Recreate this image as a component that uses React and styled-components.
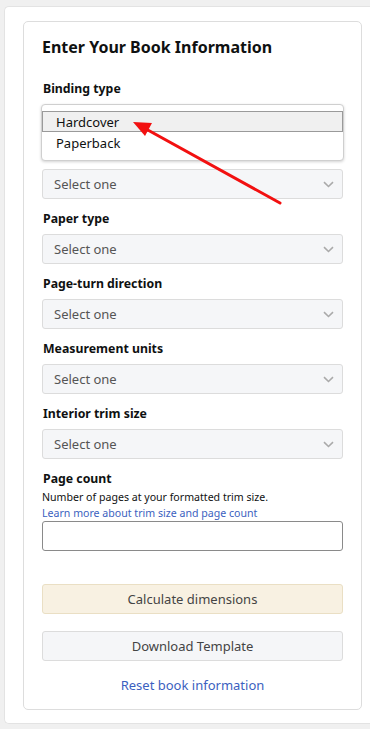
import React from "react";
import styled, { createGlobalStyle } from "styled-components";

const Global = createGlobalStyle`
  html, body { margin: 0; padding: 0; background: #f0f0f0; }
  body { font-family: "Noto Sans", "Open Sans", Arial, sans-serif; color: #0f1111; }
  * { box-sizing: border-box; }
`;

const Page = styled.div`
  padding: 6px 0 6px 4px;
  height: 729px;
  overflow: hidden;
`;

const Outer = styled.div`
  background: #fff;
  border: 1px solid #e3e3e3;
  border-right: none;
  border-radius: 5px 0 0 5px;
  padding: 14px 8px 13px 18px;
  height: 718px;
`;

const Card = styled.div`
  position: relative;
  background: #fff;
  border: 1px solid #dddddd;
  border-radius: 5px;
  padding: 12px 18px 12px 18px;
  height: 689px;
`;

const Title = styled.h1`
  margin: 0 0 20px 0;
  font-size: 16px;
  font-weight: 700;
  line-height: 26px;
  color: #0f1111;
`;

const Field = styled.div`
  display: flex;
  flex-direction: column;
  margin-bottom: 11px;
`;

const Label = styled.div`
  font-size: 12.3px;
  font-weight: 700;
  line-height: 18px;
  margin-bottom: ${(p) => p.$mb ?? 6}px;
  padding-left: 1px;
`;

const Select = styled.div`
  height: 30px;
  background: #f5f6f8;
  border: 1px solid #dcdcdc;
  border-radius: 3px;
  display: flex;
  align-items: center;
  justify-content: space-between;
  padding: 0 8px 0 11px;
  font-size: 13px;
  color: #555;
  margin-top: ${(p) => p.$mt ?? 0}px;
`;

const List = styled.div`
  height: 57px;
  margin: 0 -1px 0 -1px;
  border: 1px solid #cfcfcf;
  border-radius: 4px;
  box-shadow: 0 1px 3px rgba(0, 0, 0, 0.18);
  background: #fff;
  padding-top: 6px;
  display: flex;
  flex-direction: column;
`;

const Option = styled.div`
  height: 21px;
  display: flex;
  align-items: center;
  padding-left: 13px;
  font-size: 13px;
  color: #0f1111;
  background: ${(p) => (p.$active ? "#f0f0f0" : "transparent")};
  border: 1px solid ${(p) => (p.$active ? "#9a9a9a" : "transparent")};
`;

const Help = styled.div`
  font-size: 10.6px;
  line-height: 16px;
  color: #0f1111;
`;

const HelpLink = styled.a`
  font-size: 10.6px;
  line-height: 16px;
  color: #3b5fc0;
  text-decoration: none;
`;

const Input = styled.div`
  height: 30px;
  border: 1px solid #8a8a8a;
  border-radius: 3px;
  background: #fff;
`;

const Button = styled.div`
  height: 30px;
  border-radius: 3px;
  display: flex;
  align-items: center;
  justify-content: center;
  font-size: 13px;
  color: #444;
  background: ${(p) => (p.$primary ? "#f8f1e2" : "#f5f6f8")};
  border: 1px solid ${(p) => (p.$primary ? "#eadfc4" : "#dcdcdc")};
  margin-top: ${(p) => p.$mt}px;
`;

const Reset = styled.a`
  display: block;
  text-align: center;
  margin-top: 14px;
  font-size: 13px;
  line-height: 20px;
  color: #3b5fc0;
  text-decoration: none;
`;

const Arrow = styled.svg`
  position: absolute;
  left: 0;
  top: 0;
  pointer-events: none;
`;

const Chevron = () => (
  <svg width="11" height="7" viewBox="0 0 11 7">
    <path d="M1 1.2 L5.5 5.5 L10 1.2" fill="none" stroke="#aaaaaa" strokeWidth="1.6" />
  </svg>
);

const Sel = ({ mt }) => (
  <Select $mt={mt}>
    <span>Select one</span>
    <Chevron />
  </Select>
);

export default function App() {
  const fields = [
    "Paper type",
    "Page-turn direction",
    "Measurement units",
    "Interior trim size",
  ];
  return (
    <Page>
      <Global />
      <Outer>
        <Card>
          <Title>Enter Your Book Information</Title>
          <Field>
            <Label>Binding type</Label>
            <List>
              <Option $active>Hardcover</Option>
              <Option>Paperback</Option>
            </List>
            <Sel mt={8} />
          </Field>
          {fields.map((f) => (
            <Field key={f}>
              <Label>{f}</Label>
              <Sel />
            </Field>
          ))}
          <Field>
            <Label $mb={1}>Page count</Label>
            <Help>Number of pages at your formatted trim size.</Help>
            <HelpLink href="#">Learn more about trim size and page count</HelpLink>
            <Input />
          </Field>
          <Button $primary $mt={33}>Calculate dimensions</Button>
          <Button $mt={17}>Download Template</Button>
          <Reset href="#">Reset book information</Reset>
          <Arrow width="338" height="300" viewBox="0 0 338 300">
            <line x1="256" y1="181" x2="122" y2="107" stroke="#f21010" strokeWidth="3" strokeLinecap="round" />
            <polygon points="109,100 128,101 121,114" fill="#f21010" />
          </Arrow>
        </Card>
      </Outer>
    </Page>
  );
}
